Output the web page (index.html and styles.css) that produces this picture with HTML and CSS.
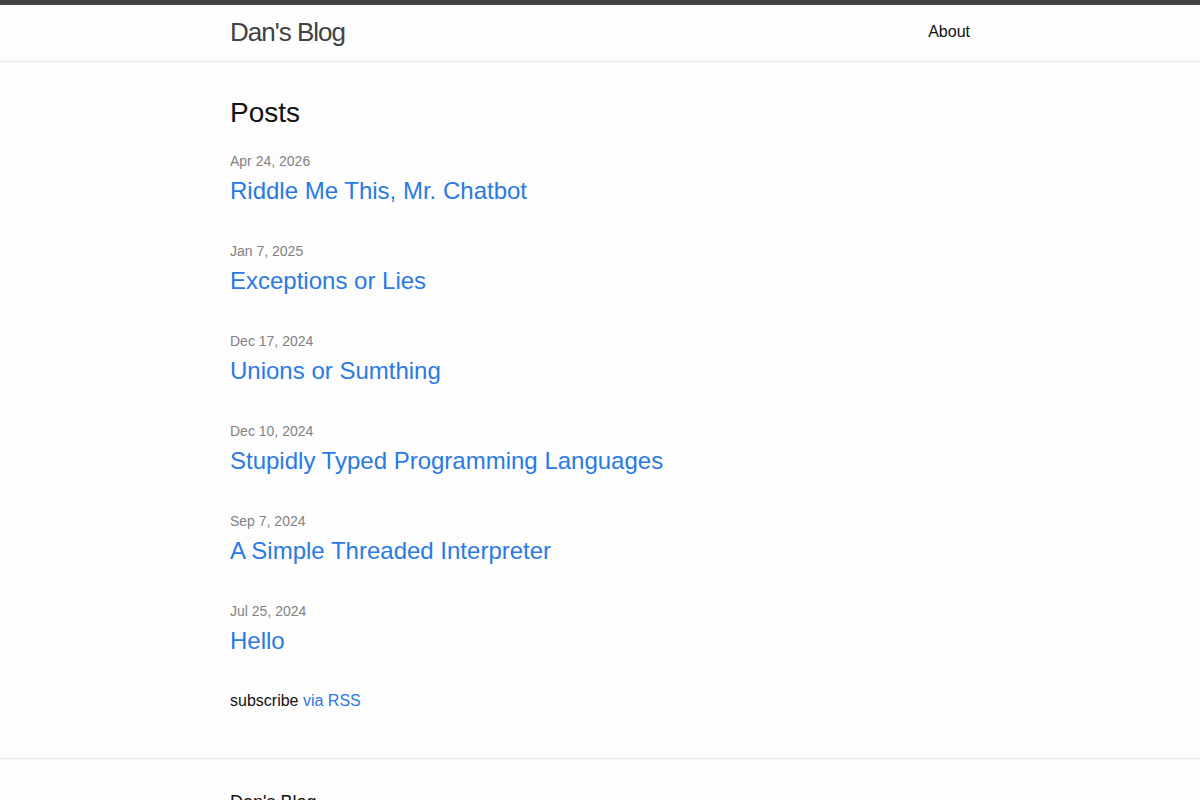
FILE: index.html
```html
<!DOCTYPE html>
<html lang="en">
<head>
  <meta charset="UTF-8" />
  <title>Dan's Blog</title>
  <link rel="stylesheet" href="styles.css">
</head>
<body>

<header class="site-header">
  <div class="wrapper header-row">
    <a class="site-title" href="#">Dan's Blog</a>
    <nav class="site-nav">
      <a class="page-link" href="#">About</a>
    </nav>
  </div>
</header>

<main class="page-content">
  <div class="wrapper">
    <h2 class="post-list-heading">Posts</h2>
    <ul class="post-list">
      <li>
        <span class="post-meta">Apr 24, 2026</span>
        <h3><a class="post-link" href="#">Riddle Me This, Mr. Chatbot</a></h3>
      </li>
      <li>
        <span class="post-meta">Jan 7, 2025</span>
        <h3><a class="post-link" href="#">Exceptions or Lies</a></h3>
      </li>
      <li>
        <span class="post-meta">Dec 17, 2024</span>
        <h3><a class="post-link" href="#">Unions or Sumthing</a></h3>
      </li>
      <li>
        <span class="post-meta">Dec 10, 2024</span>
        <h3><a class="post-link" href="#">Stupidly Typed Programming Languages</a></h3>
      </li>
      <li>
        <span class="post-meta">Sep 7, 2024</span>
        <h3><a class="post-link" href="#">A Simple Threaded Interpreter</a></h3>
      </li>
      <li>
        <span class="post-meta">Jul 25, 2024</span>
        <h3><a class="post-link" href="#">Hello</a></h3>
      </li>
    </ul>
    <p class="rss-subscribe">subscribe <a href="#">via RSS</a></p>
  </div>
</main>

<footer class="site-footer">
  <div class="wrapper">
    <h2 class="footer-heading">Dan's Blog</h2>
  </div>
</footer>

</body>
</html>
```

FILE: styles.css
```css
body {
  margin: 0;
  font-family: "Liberation Sans", Arial, sans-serif;
  font-size: 16px;
  line-height: 1.5;
  color: #111;
  background: #fdfdfd;
}

a {
  color: #2a7ae2;
  text-decoration: none;
}

h2, h3 {
  font-weight: 400;
  margin: 0;
}

.wrapper {
  max-width: 740px;
  margin: 0 auto;
}

/* Cabecera */
.site-header {
  border-top: 5px solid #424242;
  border-bottom: 1px solid #e8e8e8;
  min-height: 55.95px;
}

.header-row {
  display: flex;
  justify-content: space-between;
  align-items: center;
}

.site-title {
  font-size: 26px;
  font-weight: 300;
  line-height: 54px;
  letter-spacing: -1px;
  color: #424242;
}

.page-link {
  color: #111;
  line-height: 54px;
}

/* Contenido */
.page-content {
  padding: 30px 0;
}

.post-list-heading {
  font-size: 28px;
  margin-bottom: 17px;
}

.post-list {
  list-style: none;
  margin: 0;
  padding: 0;
}

.post-list li {
  margin-bottom: 32px;
}

.post-list li:last-child {
  margin-bottom: 30px;
}

.post-meta {
  display: block;
  font-size: 14px;
  color: #828282;
}

.post-link {
  display: block;
  font-size: 24px;
  line-height: 37px;
}

.rss-subscribe {
  margin: 0 0 15px;
}

/* Pie */
.site-footer {
  border-top: 1px solid #e8e8e8;
  padding: 30px 0;
}

.footer-heading {
  font-size: 18px;
  margin-bottom: 15px;
}
```
